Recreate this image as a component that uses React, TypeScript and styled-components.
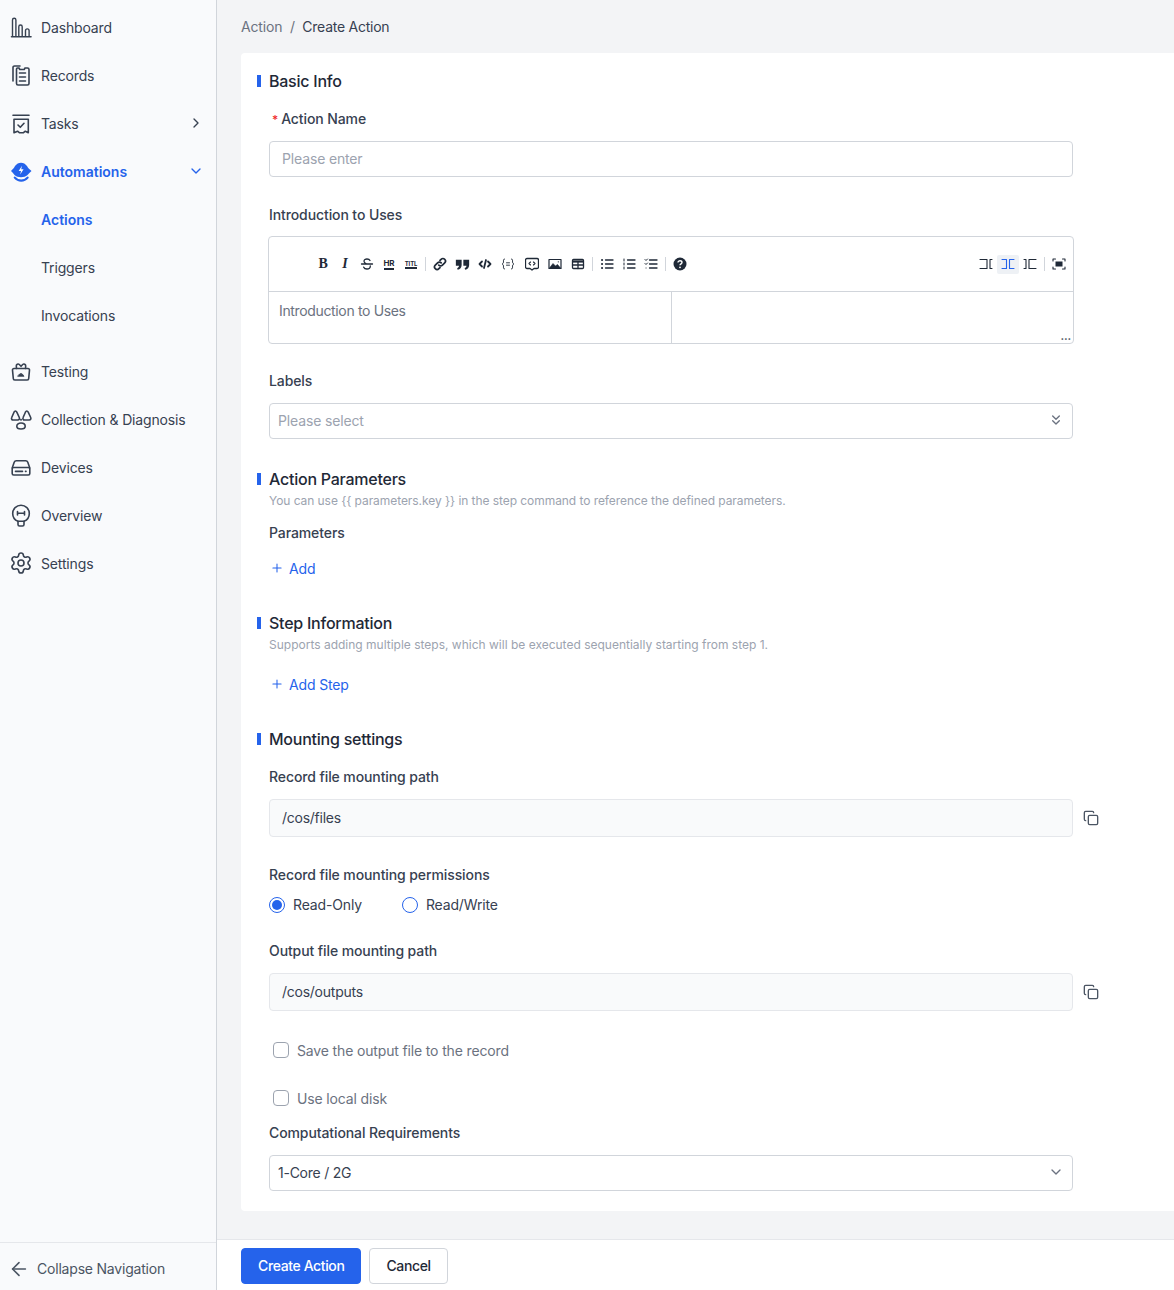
import React from "react";
import styled, { createGlobalStyle } from "styled-components";
import { ArrowLeft, ChevronDown, ChevronRight, ChevronsDown, Copy, Plus, Settings } from "lucide-react";

const GlobalStyle = createGlobalStyle`
  html, body { margin: 0; padding: 0; background: #f3f4f6; }
  body { font-family: Inter, "Liberation Sans", sans-serif; font-size: 14px; letter-spacing: -0.15px; color: #374151; }
  * { box-sizing: border-box; }
`;

const Page = styled.div`
  display: flex;
  width: 1174px;
  height: 1290px;
  overflow: hidden;
`;

const Sidebar = styled.aside`
  display: flex;
  flex-direction: column;
  flex: 0 0 217px;
  background: #f9fafc;
  border-right: 1px solid #d1d5db;
`;

const NavList = styled.nav`
  flex: 1;
  padding-top: 3px;
`;

const NavItem = styled.div<{ $active?: boolean }>`
  display: flex;
  align-items: center;
  gap: 8px;
  height: 48px;
  padding: 0 12px 0 9px;
  color: ${(p) => (p.$active ? "#2563eb" : "#374151")};
  font-weight: ${(p) => (p.$active ? 600 : 400)};
  letter-spacing: ${(p) => (p.$active ? "0" : "-0.15px")};
`;

const NavIcon = styled.span`
  display: flex;
  width: 24px;
  height: 24px;
  flex: none;
`;

const NavLabel = styled.span`
  flex: 1;
`;

const SubList = styled.div`
  margin-bottom: 8px;
`;

const SubItem = styled.div<{ $active?: boolean }>`
  display: flex;
  align-items: center;
  height: 48px;
  padding-left: 41px;
  color: ${(p) => (p.$active ? "#2563eb" : "#374151")};
  font-weight: ${(p) => (p.$active ? 600 : 400)};
  letter-spacing: ${(p) => (p.$active ? "0" : "-0.15px")};
`;

const Collapse = styled.div`
  display: flex;
  align-items: center;
  gap: 7px;
  height: 48px;
  padding: 4px 0 0 8px;
  border-top: 1px solid #e5e7eb;
  letter-spacing: -0.2px;
  color: #4b5563;
`;

const Main = styled.main`
  display: flex;
  flex-direction: column;
  flex: 1;
  min-width: 0;
`;

const Crumbs = styled.div`
  display: flex;
  align-items: center;
  gap: 7.5px;
  height: 53px;
  padding: 0 24px;
  color: #6b7280;
`;

const CrumbNow = styled.span`
  letter-spacing: -0.25px;
  color: #374151;
`;

const Content = styled.div`
  flex: 1;
  padding-left: 24px;
`;

const Card = styled.section`
  height: 1158px;
  padding: 16px 0 20px 28px;
  background: #fff;
  border-radius: 4px 0 0 4px;
`;

const SectionTitle = styled.h2<{ $top?: number }>`
  position: relative;
  margin: ${(p) => p.$top ?? 0}px 0 0;
  font-size: 16px;
  line-height: 24px;
  font-weight: 500;
  letter-spacing: -0.24px;
  color: #1f2937;

  &::before {
    content: "";
    position: absolute;
    left: -12px;
    top: 6px;
    width: 4px;
    height: 12px;
    background: #2563eb;
  }
`;

const Hint = styled.p<{ $tight?: boolean }>`
  margin: 1px 0 0;
  font-size: 12px;
  line-height: 18px;
  letter-spacing: ${(p) => (p.$tight ? "-0.06px" : "0")};
  color: #9ca3af;
`;

const Label = styled.label<{ $top: number; $bottom?: number }>`
  display: block;
  margin: ${(p) => p.$top}px 0 ${(p) => p.$bottom ?? 11}px;
  line-height: 22px;
  font-weight: 500;
  letter-spacing: -0.1px;
  color: #374151;
`;

const Star = styled.span`
  margin: 0 3px;
  color: #ef2b2b;
  font-size: 12px;
`;

const FieldBox = styled.div<{ $filled?: boolean; $tall?: boolean; $pad?: number }>`
  display: flex;
  align-items: center;
  justify-content: space-between;
  width: 804px;
  height: ${(p) => (p.$tall ? 38 : 36)}px;
  padding: 0 ${(p) => p.$pad ?? 12}px 2px;
  background: ${(p) => (p.$filled ? "#f9fafb" : "#fff")};
  border: 1px solid ${(p) => (p.$filled ? "#e5e7eb" : "#d1d5db")};
  border-radius: 4px;
`;

const Placeholder = styled.span`
  color: #9ca3af;
`;

const FieldValue = styled.span`
  letter-spacing: -0.25px;
  color: #374151;
`;

const SelectChevron = styled.span`
  display: flex;
  color: #6b7280;
`;

const CopyRow = styled.div`
  display: flex;
  align-items: center;
  gap: 10px;
  color: #4b5563;
`;

const Editor = styled.div`
  width: 806px;
  height: 108px;
  margin-left: -1px;
  border: 1px solid #d1d5db;
  border-radius: 4px;
`;

const Toolbar = styled.div`
  display: flex;
  align-items: center;
  height: 55px;
  padding: 0 3px 0 43px;
  border-bottom: 1px solid #d1d5db;
  color: #1f2937;
`;

const ToolButton = styled.span<{ $w?: number; $active?: boolean }>`
  display: flex;
  align-items: center;
  justify-content: center;
  width: ${(p) => p.$w ?? 22}px;
  height: 19px;
  border-radius: 2px;
  background: ${(p) => (p.$active ? "#eef1f5" : "transparent")};
  color: ${(p) => (p.$active ? "#2563eb" : "inherit")};
`;

const ToolSep = styled.span`
  width: 1px;
  height: 14px;
  margin: 0 3px;
  background: #d1d5db;
`;

const ToolSpacer = styled.span`
  flex: 1;
`;

const BoldGlyph = styled.span<{ $italic?: boolean }>`
  font-family: "Liberation Serif", serif;
  font-size: 14px;
  font-weight: 700;
  font-style: ${(p) => (p.$italic ? "italic" : "normal")};
`;

const TinyGlyph = styled.span<{ $small?: boolean }>`
  font-size: ${(p) => (p.$small ? 6 : 8)}px;
  line-height: ${(p) => (p.$small ? 7 : 9)}px;
  font-weight: 700;
  letter-spacing: ${(p) => (p.$small ? "-0.1px" : "-0.2px")};
  border-bottom: 2px solid currentColor;
`;

const EditorBody = styled.div`
  display: grid;
  grid-template-columns: 403px 1fr;
  position: relative;
  height: 51px;
`;

const EditorPane = styled.div`
  padding: 9px 10px;
  line-height: 20px;
  letter-spacing: -0.35px;
  color: #6b7280;
  border-right: 1px solid #d1d5db;
`;

const ResizeDots = styled.span`
  position: absolute;
  right: 2px;
  bottom: 1px;
  font-size: 11px;
  font-weight: 700;
  line-height: 11px;
  color: #4b5563;
`;

const AddLink = styled.div<{ $top: number }>`
  display: flex;
  align-items: center;
  gap: 5px;
  height: 28px;
  margin-top: ${(p) => p.$top}px;
  padding: 0 0 2px 1px;
  color: #2563eb;
`;

const RadioRow = styled.div`
  display: flex;
  gap: 40px;
  height: 22px;
`;

const RadioOption = styled.span`
  display: flex;
  align-items: center;
  gap: 8px;
  padding-bottom: 1px;
`;

const RadioDot = styled.span<{ $checked?: boolean }>`
  display: flex;
  align-items: center;
  justify-content: center;
  width: 16px;
  height: 16px;
  border: 1px solid #2563eb;
  border-radius: 50%;

  &::after {
    content: "";
    display: ${(p) => (p.$checked ? "block" : "none")};
    width: 10px;
    height: 10px;
    border-radius: 50%;
    background: #2563eb;
  }
`;

const CheckRow = styled.div<{ $top: number }>`
  display: flex;
  align-items: center;
  gap: 8px;
  height: 22px;
  margin-top: ${(p) => p.$top}px;
  padding: 0 0 2px 4px;
  color: #6b7280;
`;

const CheckBox = styled.span`
  width: 16px;
  height: 16px;
  background: #fff;
  border: 1px solid #9ca3af;
  border-radius: 4px;
`;

const Footer = styled.footer`
  display: flex;
  gap: 8px;
  height: 51px;
  padding: 8px 0 0 24px;
  background: #fff;
  border-top: 1px solid #e5e7eb;
`;

const Button = styled.button<{ $primary?: boolean }>`
  height: 36px;
  padding: 0 16px 1px;
  font: 500 14px Inter, "Liberation Sans", sans-serif;
  letter-spacing: -0.38px;
  color: ${(p) => (p.$primary ? "#fff" : "#1f2937")};
  background: ${(p) => (p.$primary ? "#2563eb" : "#fff")};
  border: 1px solid ${(p) => (p.$primary ? "#2563eb" : "#d1d5db")};
  border-radius: 4px;
`;

const Draw = ({ children }: { children: React.ReactNode }) => (
  <svg width={24} height={24} viewBox="0 0 24 24" fill="none" stroke="currentColor" strokeWidth={1.6} strokeLinecap="round" strokeLinejoin="round">
    {children}
  </svg>
);

const DashboardIcon = () => (
  <Draw>
    <path d="M2.5 21.7h19.500" />
    <path d="M3.500 21V5a1.700 1.700 0 0 1 3.400 0v16M9.800 21V11.700a1.700 1.700 0 0 1 3.400 0V21M16.500 21v-5.300a1.800 1.800 0 0 1 3.600 0V21" strokeWidth={1.400} />
  </Draw>
);

const RecordsIcon = () => (
  <Draw>
    <path d="M11 3H5.500A1.500 1.500 0 0 0 4 4.500V18" />
    <path d="M7.500 6A1 1 0 0 1 8.500 5H10l.8 1.500h4.400L16 5h2.500a1.500 1.500 0 0 1 1.500 1.500V20.500a1.500 1.500 0 0 1-1.500 1.500H9a1.500 1.500 0 0 1-1.500-1.500z" />
    <path d="M10.500 10h6M10.500 14h6M10.500 18h6" />
  </Draw>
);

const TasksIcon = () => (
  <Draw>
    <path d="M4 4.300h16" />
    <path d="M5 8.300h14.300v13.400l-3-1.500-1.800 1.500h-4.200l-1.800-1.500-3.500 1.500z" />
    <path d="M9 14l2.300 2.300 3.700-4" />
  </Draw>
);

const AutomationsIcon = () => (
  <svg width="24" height="24" viewBox="0 0 24 24">
    <path d="M2 12C3.500 10.500 5 9 6 7c3-4.500 9-4.500 12 0 1 2 2.700 3.500 4.500 5-1.500 1.300-2.800 2.500-4 4-3.200 3-9.800 3-13 0C4.500 14.500 3.500 13.300 2 12z" fill="#2563eb" />
    <path d="M13 6.800 9.700 12h2.300l-.8 3.500 3.400-5.300h-2.400z" fill="#fff" />
    <path d="M5.800 18.600c3.500 4 9.300 4 12.800 0" fill="none" stroke="#2563eb" strokeWidth={2.200} strokeLinecap="round" />
  </svg>
);

const TestingIcon = () => (
  <Draw>
    <path d="M5 9.500h14a1.500 1.500 0 0 1 1.500 1.700l-.8 8.300a1.500 1.500 0 0 1-1.500 1.500H5.800a1.500 1.500 0 0 1-1.500-1.500l-.8-8.300A1.500 1.500 0 0 1 5 9.500z" />
    <path d="M7.500 9.500 7.300 7a1.800 1.800 0 0 1 3-1.500L12 7.300l1.700-1.800a1.800 1.800 0 0 1 3 1.500l-.2 2.500" />
    <path d="M9 17.300h6l-1.400-2h-.8l-.8-1.200-.8 1.200h-.8z" fill="currentColor" strokeWidth={0.8} />
  </Draw>
);

const CollectionIcon = () => (
  <Draw>
    <path d="M5 5.200C5.800 3.600 7 3.600 7.800 5.200l2.500 5.300c.6 1.300-.2 2.500-1.500 2.500h-4.700c-1.300 0-2-1.200-1.400-2.500z" />
    <path d="M16.400 5.200c.8-1.600 2-1.600 2.800 0l2.500 5.300c.6 1.300-.2 2.500-1.500 2.500h-4.700c-1.300 0-2-1.200-1.400-2.500z" />
    <path d="M7.800 19.300c0-2 1.900-3.300 4.200-3.300s4.200 1.300 4.200 3.300-1.900 2.700-4.200 2.700-4.200-.7-4.200-2.700z" />
    <circle cx="12" cy="12.800" r="1" fill="currentColor" stroke="none" />
  </Draw>
);

const DevicesIcon = () => (
  <Draw>
    <path d="M3.200 13 5.200 7.300A2.300 2.300 0 0 1 7.400 5.800h9.200a2.300 2.300 0 0 1 2.200 1.500L20.800 13" />
    <rect x="3.200" y="12.500" width="17.600" height="7.500" rx="1.500" />
    <path d="M6.500 16.400h7M16.500 16.400h.5" />
  </Draw>
);

const OverviewIcon = () => (
  <Draw>
    <path d="M9 18.300C5.900 17.100 3.700 14.100 3.700 10.500 3.700 5.900 7.400 2.200 12 2.200s8.300 3.700 8.300 8.300c0 3.600-2.200 6.600-5.300 7.800z" />
    <path d="M9 18.300V21.500A1.500 1.500 0 0 0 10.500 23h3a1.500 1.500 0 0 0 1.500-1.500v-3.200" />
    <path d="M8.500 8.500v3.500M15.500 8.500v3.500M8.500 10.200h7" />
  </Draw>
);

const Tool = ({ children }: { children: React.ReactNode }) => (
  <svg width="14" height="14" viewBox="0 0 14 14" fill="none" stroke="currentColor" strokeWidth={1.300} strokeLinecap="round" strokeLinejoin="round">
    {children}
  </svg>
);

const ListLines = () => <path d="M5.500 3h7.500M5.500 7h7.500M5.500 11h7.500" />;

export default function App() {
  return (
    <Page>
      <GlobalStyle />
      <Sidebar>
        <NavList>
          <NavItem><NavIcon><DashboardIcon /></NavIcon><NavLabel>Dashboard</NavLabel></NavItem>
          <NavItem><NavIcon><RecordsIcon /></NavIcon><NavLabel>Records</NavLabel></NavItem>
          <NavItem><NavIcon><TasksIcon /></NavIcon><NavLabel>Tasks</NavLabel><ChevronRight size={16} /></NavItem>
          <NavItem $active><NavIcon><AutomationsIcon /></NavIcon><NavLabel>Automations</NavLabel><ChevronDown size={16} /></NavItem>
          <SubList>
            <SubItem $active>Actions</SubItem>
            <SubItem>Triggers</SubItem>
            <SubItem>Invocations</SubItem>
          </SubList>
          <NavItem><NavIcon><TestingIcon /></NavIcon><NavLabel>Testing</NavLabel></NavItem>
          <NavItem><NavIcon><CollectionIcon /></NavIcon><NavLabel>Collection &amp; Diagnosis</NavLabel></NavItem>
          <NavItem><NavIcon><DevicesIcon /></NavIcon><NavLabel>Devices</NavLabel></NavItem>
          <NavItem><NavIcon><OverviewIcon /></NavIcon><NavLabel>Overview</NavLabel></NavItem>
          <NavItem><NavIcon><Settings size={24} strokeWidth={1.600} /></NavIcon><NavLabel>Settings</NavLabel></NavItem>
        </NavList>
        <Collapse><ArrowLeft size={22} strokeWidth={1.700} />Collapse Navigation</Collapse>
      </Sidebar>
      <Main>
        <Crumbs>
          <span>Action</span>
          <span>/</span>
          <CrumbNow>Create Action</CrumbNow>
        </Crumbs>
        <Content>
          <Card>
            <SectionTitle>Basic Info</SectionTitle>
            <Label $top={15} $bottom={10}><Star>*</Star>Action Name</Label>
            <FieldBox><Placeholder>Please enter</Placeholder></FieldBox>

            <Label $top={27} $bottom={10}>Introduction to Uses</Label>
            <Editor>
              <Toolbar>
                <ToolButton><BoldGlyph>B</BoldGlyph></ToolButton>
                <ToolButton><BoldGlyph $italic>I</BoldGlyph></ToolButton>
                <ToolButton>
                  <Tool>
                    <path d="M10 3.500C9.500 2.500 8.300 2 7 2 5.400 2 4 2.800 4 4.200c0 1 .7 1.700 2 2.300M10.300 9c.2 1.900-1.300 3-3.300 3-1.400 0-2.800-.6-3.300-1.800M1.500 7h11" />
                  </Tool>
                </ToolButton>
                <ToolButton><TinyGlyph>HR</TinyGlyph></ToolButton>
                <ToolButton><TinyGlyph $small>TITL</TinyGlyph></ToolButton>
                <ToolSep />
                <ToolButton>
                  <Tool>
                    <path d="M5.800 8.200a2.500 2.500 0 0 0 3.600 0l2.300-2.300a2.500 2.500 0 0 0-3.600-3.600L7 3.400" strokeWidth={1.700} />
                    <path d="M8.200 5.800a2.500 2.500 0 0 0-3.600 0L2.300 8.100a2.500 2.500 0 0 0 3.600 3.600L7 10.600" strokeWidth={1.700} />
                  </Tool>
                </ToolButton>
                <ToolButton>
                  <svg width="15" height="15" viewBox="0 0 14 14" fill="currentColor">
                    <path d="M.8 2.500h5.400v5C6.200 10 4.700 11.500 2.500 12L2 10.500c1-.4 1.600-1 1.700-2.300H.8zM7.800 2.500h5.400v5c0 2.500-1.500 4-3.700 4.500L9 10.500c1-.4 1.600-1 1.700-2.300H7.800z" />
                  </svg>
                </ToolButton>
                <ToolButton $w={23}>
                  <Tool>
                    <path d="M4 4.500 1.500 7 4 9.500M10 4.500 12.500 7 10 9.500M8 3 6 11" strokeWidth={1.800} />
                  </Tool>
                </ToolButton>
                <ToolButton $w={24}>
                  <Tool>
                    <path d="M3.500 2C2 2 2.500 3.500 2.500 5S1 7 1 7s1.500.5 1.500 2-.5 3 1 3M10.500 2c1.500 0 1 1.500 1 3S13 7 13 7s-1.500.5-1.500 2 .5 3-1 3M5.500 5.800h3M5.500 8.200h3" strokeWidth={0.900} />
                  </Tool>
                </ToolButton>
                <ToolButton $w={23}>
                  <Tool>
                    <path d="M2 1.500h10A1.500 1.500 0 0 1 13.500 3v7a1.500 1.500 0 0 1-1.500 1.500H9L7 13l-2-1.500H2A1.500 1.500 0 0 1 .5 10V3A1.500 1.500 0 0 1 2 1.500z" />
                    <path d="M5.500 5 4 6.500 5.500 8M8.500 5 10 6.500 8.500 8" strokeWidth={1.100} />
                  </Tool>
                </ToolButton>
                <ToolButton $w={23}>
                  <Tool>
                    <rect x="1" y="2.500" width="12" height="9" strokeWidth={1.200} />
                    <path d="M1.500 11 5 6.500l2.500 2.500L9.500 7.500l3 3.500z" fill="currentColor" strokeWidth={0.600} />
                    <circle cx="10.300" cy="4.800" r=".6" fill="currentColor" stroke="none" />
                  </Tool>
                </ToolButton>
                <ToolButton $w={23}>
                  <Tool>
                    <rect x="1.500" y="2.500" width="11" height="9" rx="1" />
                    <path d="M1.500 4.500h11" strokeWidth={2.200} strokeLinecap="butt" />
                    <path d="M1.500 8h11M7 5v6.500" />
                  </Tool>
                </ToolButton>
                <ToolSep />
                <ToolButton><Tool><ListLines /><path d="M2 3h.1M2 7h.1M2 11h.1" strokeWidth={2} /></Tool></ToolButton>
                <ToolButton><Tool><ListLines /><path d="M2 2v2M2 6v2M2 10v2" strokeWidth={1} /></Tool></ToolButton>
                <ToolButton><Tool><ListLines /><path d="M1 2.500 2 3.500 3.500 2M1 6.500 2 7.500 3.500 6M2 11h.1" strokeWidth={1} /></Tool></ToolButton>
                <ToolSep />
                <ToolButton>
                  <svg width="14" height="14" viewBox="0 0 14 14">
                    <circle cx="7" cy="7" r="6.500" fill="currentColor" />
                    <path d="M5 5.500C5 4.300 6 3.800 7 3.800s2 .6 2 1.700c0 1.300-2 1.400-2 2.800" fill="none" stroke="#fff" strokeWidth={1.400} />
                    <circle cx="7" cy="10.300" r=".9" fill="#fff" />
                  </svg>
                </ToolButton>
                <ToolSpacer />
                <ToolButton>
                  <Tool><path d="M1 2.500h7v9H1M11 2.500v9M13 2.500h-2M13 11.500h-2" strokeWidth={1.100} /></Tool>
                </ToolButton>
                <ToolButton $active>
                  <Tool><path d="M1 2.500h4.500v9H1M13 2.500H8.500v9H13" strokeWidth={1.100} /></Tool>
                </ToolButton>
                <ToolButton>
                  <Tool><path d="M13 2.500H6v9h7M3 2.500v9M1 2.500h2M1 11.500h2" strokeWidth={1.100} /></Tool>
                </ToolButton>
                <ToolSep />
                <ToolButton>
                  <Tool>
                    <path d="M1 4V2h2.500M10.500 2H13v2M13 10v2h-2.500M3.500 12H1v-2" strokeWidth={1.100} />
                    <rect x="3.500" y="4.500" width="7" height="5" fill="currentColor" stroke="none" />
                  </Tool>
                </ToolButton>
              </Toolbar>
              <EditorBody>
                <EditorPane>Introduction to Uses</EditorPane>
                <div />
                <ResizeDots>...</ResizeDots>
              </EditorBody>
            </Editor>

            <Label $top={26}>Labels</Label>
            <FieldBox $pad={8}>
              <Placeholder>Please select</Placeholder>
              <SelectChevron><ChevronsDown size={16} /></SelectChevron>
            </FieldBox>

            <SectionTitle $top={28}>Action Parameters</SectionTitle>
            <Hint $tight>You can use {"{{ parameters.key }}"} in the step command to reference the defined parameters.</Hint>
            <Label $top={12} $bottom={11}>Parameters</Label>
            <AddLink $top={0}>
              <Plus size={14} strokeWidth={1.800} />
              Add
            </AddLink>

            <SectionTitle $top={28}>Step Information</SectionTitle>
            <Hint>Supports adding multiple steps, which will be executed sequentially starting from step 1.</Hint>
            <AddLink $top={17}>
              <Plus size={14} strokeWidth={1.800} />
              Add Step
            </AddLink>

            <SectionTitle $top={28}>Mounting settings</SectionTitle>
            <Label $top={15}>Record file mounting path</Label>
            <CopyRow>
              <FieldBox $filled $tall><FieldValue>/cos/files</FieldValue></FieldBox>
              <Copy size={16} />
            </CopyRow>

            <Label $top={27} $bottom={8}>Record file mounting permissions</Label>
            <RadioRow>
              <RadioOption><RadioDot $checked />Read-Only</RadioOption>
              <RadioOption><RadioDot />Read/Write</RadioOption>
            </RadioRow>

            <Label $top={24}>Output file mounting path</Label>
            <CopyRow>
              <FieldBox $filled $tall><FieldValue>/cos/outputs</FieldValue></FieldBox>
              <Copy size={16} />
            </CopyRow>

            <CheckRow $top={29}><CheckBox />Save the output file to the record</CheckRow>
            <CheckRow $top={26}><CheckBox />Use local disk</CheckRow>

            <Label $top={12}>Computational Requirements</Label>
            <FieldBox $pad={8}>
              <FieldValue>1-Core / 2G</FieldValue>
              <SelectChevron><ChevronDown size={16} /></SelectChevron>
            </FieldBox>
          </Card>
        </Content>
        <Footer>
          <Button $primary>Create Action</Button>
          <Button>Cancel</Button>
        </Footer>
      </Main>
    </Page>
  );
}
